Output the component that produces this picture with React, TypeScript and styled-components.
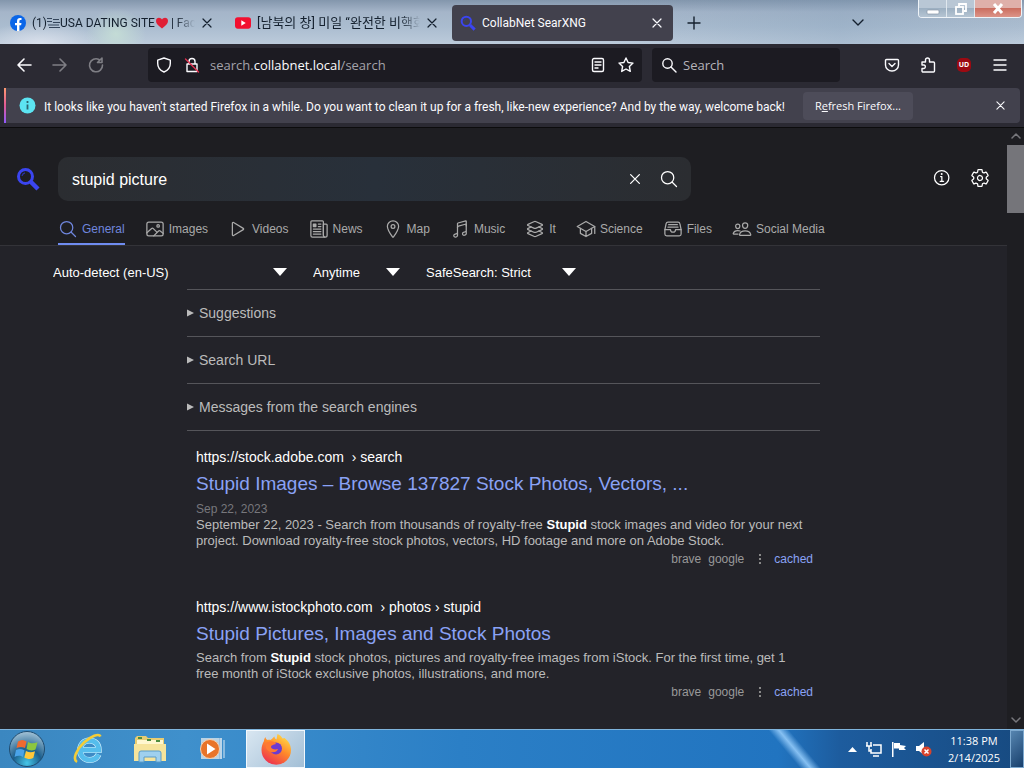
import React from "react";
import styled, { createGlobalStyle, css } from "styled-components";
import {
  IoSearchOutline, IoImageOutline, IoPlayOutline, IoNewspaperOutline, IoLocationOutline,
  IoMusicalNotesOutline, IoLayersOutline, IoSchoolOutline, IoFileTrayFullOutline,
  IoPeopleOutline, IoInformationCircleOutline, IoSettingsOutline, IoCloseOutline,
} from "react-icons/io5";

const UI = `Roboto, "Noto Sans", "Noto Sans CJK KR", sans-serif`;
const UI_WIDE = `"Open Sans", "Noto Sans", sans-serif`;
const WEB = `"Liberation Sans", Arial, sans-serif`;

const Global = createGlobalStyle`
  *, *::before, *::after { box-sizing: border-box; }
  body { margin: 0; background: #232329; }
  button, input, select { font: inherit; color: inherit; background: none; border: 0; margin: 0; padding: 0; outline: 0; }
  button { cursor: pointer; }
  a { text-decoration: none; color: inherit; }
  svg { display: block; flex: none; }
`;

const Screen = styled.div`
  height: 100vh;
  min-height: 600px;
  display: flex;
  flex-direction: column;
  overflow: hidden;
  font-family: ${UI};
  font-size: 12px;
`;

/* ---- browser chrome ---- */

const TabStrip = styled.div`
  height: 44px;
  flex: none;
  display: flex;
  color: #14202e;
  background:
    radial-gradient(ellipse 30px 26px at 116px 34px, rgba(200, 226, 214, 0.8), transparent),
    radial-gradient(ellipse 60px 22px at 40px 44px, rgba(226, 230, 240, 0.8), transparent),
    linear-gradient(90deg, transparent 60%, rgba(120, 150, 180, 0.25) 82%, transparent),
    linear-gradient(180deg, #8396ac 0, #a5b5c9 12px, #aabccf 26px, #bccbdb 44px);
`;
const TabList = styled.div`
  flex: 1;
  min-width: 0;
  display: flex;
  align-items: center;
  padding-top: 2px;
`;
const Tab = styled.div<{ $active?: boolean }>`
  width: 225px;
  height: 36px;
  display: flex;
  align-items: center;
  gap: 6px;
  padding: 0 12px 0 10px;
  border-radius: 4px;
  ${(p) => p.$active && css`
    width: 221px;
    margin: 0 13px 0 2px;
    padding: 0 10px 0 8px;
    background: #42414d;
    color: #fbfbfe;
  `}
`;
const TabTitle = styled.span<{ $fade?: boolean; $korean?: boolean }>`
  flex: 1;
  min-width: 0;
  overflow: hidden;
  white-space: nowrap;
  line-height: 20px;
  font-size: ${(p) => (p.$korean ? 13 : 12)}px;
  ${(p) => p.$fade && css`mask-image: linear-gradient(90deg, #000 calc(100% - 20px), transparent);`}
`;
const IconButton = styled.button<{ $size?: number; $dim?: boolean }>`
  width: ${(p) => p.$size ?? 16}px;
  height: ${(p) => p.$size ?? 16}px;
  flex: none;
  display: grid;
  place-items: center;
  opacity: ${(p) => (p.$dim ? 0.4 : 1)};
`;
const AllTabs = styled.div`
  display: flex;
  align-items: center;
  padding: 0 52px 0 0;
`;
const WindowButtons = styled.div`
  width: 104px;
  height: 18px;
  margin-right: 2px;
  display: flex;
  border: 1px solid #eef3f8;
  border-top: 0;
  border-radius: 0 0 4px 4px;
  overflow: hidden;
`;
const WindowButton = styled.button<{ $close?: boolean }>`
  flex: ${(p) => (p.$close ? 46 : 27)};
  display: grid;
  place-items: center;
  border-right: ${(p) => (p.$close ? 0 : "1px solid #dfe7ee")};
  background: ${(p) => (p.$close
    ? "linear-gradient(#dfb0aa 0 45%, #cb6e60 50%, #dc9488)"
    : "linear-gradient(#b9c7d5 0 45%, #9db0c2 50%, #b5c5d3)")};
`;

const NavBar = styled.div`
  height: 44px;
  flex: none;
  display: flex;
  align-items: center;
  padding: 0 16px 2px;
  background: #2b2a33;
  color: #fbfbfe;
  font-family: ${UI_WIDE};
  font-size: 13px;
`;
const NavGroup = styled.div`
  display: flex;
  gap: 20px;
  margin-right: 44px;
`;
const UrlBox = styled.div`
  flex: 1;
  height: 34px;
  display: flex;
  align-items: center;
  gap: 10px;
  padding: 0 8px;
  border-radius: 4px;
  background: #1c1b22;
`;
const Address = styled.div`
  flex: 1;
  white-space: nowrap;
  color: #a4a3aa;
  b { font-weight: 400; color: #fbfbfe; }
`;
const SearchBox = styled.label`
  width: 188px;
  height: 34px;
  margin: 0 44px 0 10px;
  display: flex;
  align-items: center;
  gap: 6px;
  padding: 0 9px;
  border-radius: 4px;
  background: #1c1b22;
  input { flex: 1; min-width: 0; }
  input::placeholder { color: #b5b4bb; opacity: 1; }
`;
const ToolGroup = styled.div`
  display: flex;
  gap: 20px;
`;
const UrlActions = styled.div`
  display: flex;
  gap: 12px;
`;
const Blocker = styled.span`
  width: 14px;
  height: 14px;
  display: grid;
  place-items: center;
  border-radius: 5px;
  background: #9c0a12;
  color: #fff;
  font-size: 7px;
  font-weight: 700;
  line-height: 14px;
`;

const NoticeArea = styled.div`
  flex: none;
  padding: 0 4px 4px;
  background: #2b2a33;
  border-bottom: 1px solid #0c0c0d;
`;
const Notice = styled.div`
  height: 35px;
  display: flex;
  align-items: center;
  padding: 0 12px 0 15px;
  border-radius: 0 4px 4px 0;
  background: linear-gradient(180deg, #ff9a70, #e05a94 50%, #9059ff) left / 2px 100% no-repeat, #42414d;
  color: #fbfbfe;
  white-space: nowrap;
`;
const NoticeText = styled.span`
  margin: 0 18px 0 8px;
  padding-top: 2px;
  line-height: 20px;
`;
const RefreshButton = styled.button`
  width: 110px;
  height: 28px;
  margin-right: auto;
  border-radius: 4px;
  background: #4d4c59;
  font-family: ${UI_WIDE};
  font-size: 11px;
`;

/* ---- web page ---- */

const Viewport = styled.div`
  flex: 1;
  min-height: 0;
  display: flex;
  font-family: ${WEB};
  background: #232329;
`;
const Page = styled.main`
  flex: 1;
  min-width: 0;
  overflow: hidden;
  color: #bbb;
`;
const PageHeader = styled.header`
  background: #1e1e22;
  border-bottom: 1px solid #333338;
`;
const SearchRow = styled.form`
  display: flex;
  align-items: center;
  padding: 29px 17px 14px 16px;
  color: #fff;
`;
const QueryBox = styled.div`
  width: 633px;
  height: 44px;
  margin: 0 auto 0 18px;
  display: flex;
  align-items: center;
  gap: 14px;
  padding: 0 12px 0 14px;
  border-radius: 10px;
  background: linear-gradient(90deg, #2b2d31, #28303a 50%, #2b2d31);
  font-size: 16px;
  input { flex: 1; min-width: 0; padding-top: 2px; }
`;
const HeaderLinks = styled.div`
  display: flex;
  gap: 18px;
  padding-bottom: 2px;
`;
const Categories = styled.nav`
  display: flex;
  gap: 20px;
  padding-left: 58px;
`;
const Category = styled.a<{ $active?: boolean }>`
  height: 30px;
  display: flex;
  align-items: center;
  gap: 4px;
  font-size: 12px;
  white-space: nowrap;
  color: ${(p) => (p.$active ? "#6f86dd" : "#aaa")};
  border-bottom: 2px solid ${(p) => (p.$active ? "#6f8cf0" : "transparent")};
`;
const Filters = styled.div`
  display: flex;
  gap: 26px;
  padding: 16px 0 7px 53px;
  color: #fff;
  font-size: 13px;
`;
const Filter = styled.div<{ $width: number }>`
  width: ${(p) => p.$width}px;
  height: 20px;
  display: grid;
  align-items: center;
  select, svg { grid-area: 1 / 1; }
  select { appearance: none; width: 100%; }
  svg { justify-self: end; pointer-events: none; }
`;
const Column = styled.div`
  max-width: 633px;
  margin-left: 187px;
`;
const Fold = styled.details`
  border-top: 1px solid #55555a;
  &:nth-of-type(3) { border-bottom: 1px solid #55555a; }
  summary {
    height: 46px;
    display: flex;
    align-items: center;
    gap: 5px;
    font-size: 14px;
    list-style: none;
    cursor: pointer;
  }
`;
const Result = styled.article`
  padding: 17px 7px 0 9px;
  & + & { padding-top: 30px; }
`;
const ResultUrl = styled.a`
  display: block;
  font-size: 14px;
  line-height: 18px;
  color: #fff;
  span { margin-left: 4px; }
`;
const ResultTitle = styled.h3`
  margin: 5px 0 3px;
  font-size: 19px;
  line-height: 26px;
  font-weight: 400;
  white-space: nowrap;
  color: #8aa2f5;
`;
const Published = styled.time`
  display: block;
  padding-top: 1px;
  font-size: 12px;
  line-height: 16px;
  color: #77777c;
`;
const Snippet = styled.p`
  margin: 0;
  padding-right: 8px;
  font-size: 13px;
  line-height: 16px;
  b { color: #fff; }
`;
const Engines = styled.div`
  display: flex;
  justify-content: flex-end;
  align-items: center;
  gap: 7px;
  margin-top: 1px;
  font-size: 12px;
  line-height: 18px;
  color: #999;
  svg { margin: 0 5px 0 8px; }
  a { color: #8aa2f5; }
`;
const ScrollBar = styled.div`
  width: 17px;
  flex: none;
  display: flex;
  flex-direction: column;
  align-items: center;
  padding: 3px 0 4px;
  background: #1e1e22;
`;
const ScrollThumb = styled.div`
  width: 17px;
  height: 68px;
  margin: 4px 0 auto;
  background: #75757a;
`;

/* ---- taskbar ---- */

const TaskBar = styled.footer`
  height: 39px;
  flex: none;
  display: flex;
  align-items: center;
  border-top: 1px solid #7fb4dc;
  color: #fff;
  background:
    linear-gradient(50deg, transparent calc(100% - 196px), #86c0f2 calc(100% - 188px), transparent calc(100% - 180px)),
    linear-gradient(90deg, #3b87c0 0, #3f90cc 18%, #2b7fc6 45%, #2174c0 76%, #1d5c9e 82%, #174a80 100%);
`;
const StartButton = styled.button`
  width: 36px;
  height: 36px;
  margin: 0 13px 0 9px;
`;
const TaskButton = styled.button<{ $active?: boolean }>`
  width: 59px;
  height: 38px;
  margin-right: 3px;
  display: grid;
  place-items: center;
  ${(p) => p.$active && css`
    margin-left: 2px;
    border: 1px solid #f2f8fd;
    background: linear-gradient(135deg, #d8e6f1, #a3bfd6);
  `}
`;
const Tray = styled.div`
  margin-left: auto;
  display: flex;
  align-items: center;
  gap: 8px;
`;
const Clock = styled.div`
  width: 52px;
  margin: 0 2px 0 8px;
  text-align: center;
  font-family: ${UI_WIDE};
  font-size: 11px;
  line-height: 17px;
  white-space: nowrap;
`;
const ShowDesktop = styled.button`
  width: 14px;
  height: 38px;
  border: 1px solid #7da9cf;
  background: linear-gradient(135deg, #5685b0, #173f6c);
`;

/* ---- drawings ---- */

const InlineDrawing = styled.svg`
  display: inline-block;
  vertical-align: -2px;
`;

type LineProps = { size?: number; w?: number; box?: number; color?: string; children: React.ReactNode };
const Line = ({ size = 16, w = 1.4, box = 16, color = "currentColor", children }: LineProps) => (
  <svg width={size} height={size} viewBox={`0 0 ${box} ${box}`} fill="none" stroke={color} strokeWidth={w} strokeLinecap="round" strokeLinejoin="round" aria-hidden>
    {children}
  </svg>
);
const Cross = ({ size = 10, w = 1.2 }: { size?: number; w?: number }) => (
  <Line size={size} box={10} w={w}><path d="M1 1l8 8M9 1L1 9" /></Line>
);
const Facebook = () => (
  <svg width="16" height="16" viewBox="0 0 16 16" aria-hidden>
    <circle cx="8" cy="8" r="8" fill="#0a66e8" />
    <path d="M7 16V10.2H5V7.9h2V6.2c0-2.1 1.2-3.2 3-3.2.8 0 1.5.1 1.5.1v1.9h-.9c-.9 0-1.2.6-1.2 1.2v1.7h2.1l-.4 2.3H9.4V16z" fill="#fff" />
  </svg>
);
const YouTube = () => (
  <svg width="16" height="16" viewBox="0 0 17 16" aria-hidden>
    <rect y="2" width="17" height="12" rx="3" fill="#f20f2f" />
    <path d="M6.7 5.2v5.6L11.4 8z" fill="#fff" />
  </svg>
);
const Flag = () => (
  <InlineDrawing width="13" height="12" viewBox="0 0 13 12" aria-hidden>
    <path d="M0 1.5h5M6 2.5h6M0 4.5h5M6 5.5h7M1 8h11M2 10.5h11" stroke="#33445a" fill="none" />
  </InlineDrawing>
);
const Heart = () => (
  <InlineDrawing width="13" height="12" viewBox="-1 0 13 12" aria-hidden>
    <path d="M6 11.5C2.5 8.7 0 6.6 0 3.9 0 2 1.4.8 3 .8c1.3 0 2.4.7 3 1.8C6.6 1.5 7.7.8 9 .8c1.6 0 3 1.2 3 3.1 0 2.7-2.5 4.8-6 7.6z" fill="#e01f35" />
  </InlineDrawing>
);
const Magnifier = ({ size }: { size: number }) => (
  <svg width={size} height={size} viewBox="0 0 24 24" fill="none" stroke="#3b45f0" aria-hidden>
    <circle cx="9.5" cy="9.5" r="7" strokeWidth="3" />
    <path d="M6 9a4 4 0 0 1 3-3.2" stroke="#2a33a8" strokeWidth="1.2" />
    <path d="M15 15l7 7" strokeWidth="4.5" />
  </svg>
);
const Arrow = () => (
  <svg width="14" height="8" viewBox="0 0 14 8" aria-hidden><path d="M0 0h14L7 8z" fill="#fff" /></svg>
);
const Disclosure = () => (
  <svg width="7" height="8" viewBox="0 0 7 8" aria-hidden><path d="M0 .5v7L7 4z" fill="#bbb" /></svg>
);
const Kebab = () => (
  <svg width="3" height="13" viewBox="0 0 3 13" aria-hidden fill="#888">
    <rect y="1" width="2" height="2" /><rect y="5" width="2" height="2" /><rect y="9" width="2" height="2" />
  </svg>
);

const categories = [
  { name: "General", Icon: IoSearchOutline },
  { name: "Images", Icon: IoImageOutline },
  { name: "Videos", Icon: IoPlayOutline },
  { name: "News", Icon: IoNewspaperOutline },
  { name: "Map", Icon: IoLocationOutline },
  { name: "Music", Icon: IoMusicalNotesOutline },
  { name: "It", Icon: IoLayersOutline },
  { name: "Science", Icon: IoSchoolOutline },
  { name: "Files", Icon: IoFileTrayFullOutline },
  { name: "Social Media", Icon: IoPeopleOutline },
];
const filters = [
  { label: "Language", value: "Auto-detect (en-US)", width: 234 },
  { label: "Time range", value: "Anytime", width: 87 },
  { label: "Safe search", value: "SafeSearch: Strict", width: 150 },
];

const ResultFooter = () => (
  <Engines><span>brave</span><span>google</span><Kebab /><a href="#cached">cached</a></Engines>
);

export default function App() {
  return (
    <Screen>
      <Global />
      <TabStrip>
        <TabList>
          <Tab>
            <Facebook />
            <TabTitle $fade>(1)<Flag />USA DATING SITE<Heart /> | Fac</TabTitle>
            <IconButton aria-label="Close tab" $size={12}><Cross /></IconButton>
          </Tab>
          <Tab>
            <YouTube />
            <TabTitle $fade $korean>[남북의 창] 미일 “완전한 비핵화</TabTitle>
            <IconButton aria-label="Close tab" $size={12}><Cross /></IconButton>
          </Tab>
          <Tab $active>
            <Magnifier size={16} />
            <TabTitle>CollabNet SearXNG</TabTitle>
            <IconButton aria-label="Close tab" $size={12}><Cross /></IconButton>
          </Tab>
          <IconButton aria-label="New tab"><Line><path d="M8 2v12M2 8h12" /></Line></IconButton>
        </TabList>
        <AllTabs>
          <IconButton aria-label="List all tabs"><Line><path d="M3 6l5 5 5-5" /></Line></IconButton>
        </AllTabs>
        <WindowButtons>
          <WindowButton aria-label="Minimize">
            <svg width="14" height="12" viewBox="0 0 14 12"><rect x="1" y="7" width="12" height="4" rx="1" fill="#fff" stroke="#8797a8" strokeWidth=".7" /></svg>
          </WindowButton>
          <WindowButton aria-label="Restore">
            <svg width="12" height="12" viewBox="0 0 12 12" fill="none" stroke="#fff" strokeWidth="1.8"><path d="M4 3V1h7v7H9" /><rect x="1" y="4" width="7" height="7" /></svg>
          </WindowButton>
          <WindowButton $close aria-label="Close">
            <svg width="12" height="11" viewBox="0 0 12 11"><path d="M2 1l8 9M10 1L2 10" stroke="#fff" strokeWidth="3" /></svg>
          </WindowButton>
        </WindowButtons>
      </TabStrip>

      <NavBar>
        <NavGroup>
          <IconButton aria-label="Back"><Line w={1.6}><path d="M15 8H2M8 2L2 8l6 6" /></Line></IconButton>
          <IconButton aria-label="Forward" $dim><Line w={1.6}><path d="M1 8h13M8 2l6 6-6 6" /></Line></IconButton>
          <IconButton aria-label="Reload" $dim><Line w={1.6}><path d="M11 2.5A6.5 6.5 0 1 0 14.5 8M9.5 5.5H14V1z" /></Line></IconButton>
        </NavGroup>
        <UrlBox>
          <UrlActions>
            <IconButton aria-label="Tracking protection"><Line><path d="M8 1l6.3 2.2v3.3c0 4-2.3 6.9-6.3 8.5-4-1.6-6.3-4.5-6.3-8.5V3.2z" /></Line></IconButton>
            <IconButton aria-label="Connection not secure">
              <Line><path d="M3 7h10v7.5H3zM5 7V4.5a3 3 0 0 1 6 0V7" /><path d="M1.5 2l13 13" stroke="#e0304f" /></Line>
            </IconButton>
          </UrlActions>
          <Address>search.<b>collabnet.local</b>/search</Address>
          <UrlActions>
            <IconButton aria-label="Reader view"><Line><rect x="2.5" y="1.5" width="11" height="13" rx="1.5" /><path d="M5 5h6M5 8h6M5 11h3" /></Line></IconButton>
            <IconButton aria-label="Bookmark"><Line><path d="M8 1l2.1 4.5 4.9.6-3.6 3.4.9 4.9L8 12l-4.3 2.4.9-4.9L1 6.1l4.9-.6z" /></Line></IconButton>
          </UrlActions>
        </UrlBox>
        <SearchBox>
          <Line><circle cx="6.5" cy="6.5" r="4.7" /><path d="M10 10l5 5" /></Line>
          <input aria-label="Search the web" placeholder="Search" />
        </SearchBox>
        <ToolGroup>
          <IconButton aria-label="Pocket"><Line><path d="M2.5 2.5h11a1 1 0 0 1 1 1V8a6.5 6 0 0 1-13 0V3.5a1 1 0 0 1 1-1zM5 6.5l3 3 3-3" /></Line></IconButton>
          <IconButton aria-label="Extensions"><Line><path d="M2 5h3.5V3a2 2 0 0 1 4 0v2H13.5a1 1 0 0 1 1 1v8a1 1 0 0 1-1 1H3a1 1 0 0 1-1-1v-2.5h2a1.8 1.8 0 0 0 0-3.5H2z" /></Line></IconButton>
          <IconButton aria-label="uBlock"><Blocker>UD</Blocker></IconButton>
          <IconButton aria-label="Menu"><Line><path d="M2 3h12M2 8h12M2 13h12" /></Line></IconButton>
        </ToolGroup>
      </NavBar>

      <NoticeArea>
        <Notice>
          <svg width="17" height="17" viewBox="0 0 17 17" aria-hidden><circle cx="8.5" cy="8.5" r="8" fill="#5ce4f2" /><path d="M8.5 7.5v5M8.5 4v2" stroke="#2c6470" strokeWidth="1.8" /></svg>
          <NoticeText>It looks like you haven't started Firefox in a while. Do you want to clean it up for a fresh, like-new experience? And by the way, welcome back!</NoticeText>
          <RefreshButton>R<u>e</u>fresh Firefox...</RefreshButton>
          <IconButton aria-label="Dismiss"><Cross size={9} /></IconButton>
        </Notice>
      </NoticeArea>

      <Viewport>
        <Page>
          <PageHeader>
            <SearchRow onSubmit={(e) => e.preventDefault()}>
              <a href="#home" aria-label="Home"><Magnifier size={24} /></a>
              <QueryBox>
                <input aria-label="Query" defaultValue="stupid picture" />
                <IconButton type="button" aria-label="Clear" $size={20}><IoCloseOutline size={20} /></IconButton>
                <IconButton type="submit" aria-label="Search" $size={20}><IoSearchOutline size={20} /></IconButton>
              </QueryBox>
              <HeaderLinks>
                <a href="#about" aria-label="About"><IoInformationCircleOutline size={20} /></a>
                <a href="#preferences" aria-label="Preferences"><IoSettingsOutline size={20} /></a>
              </HeaderLinks>
            </SearchRow>
            <Categories>
              {categories.map(({ name, Icon }, i) => (
                <Category key={name} href={`#${name}`} $active={i === 0}><Icon size={20} />{name}</Category>
              ))}
            </Categories>
          </PageHeader>
          <Filters>
            {filters.map((f) => (
              <Filter key={f.label} $width={f.width}>
                <select aria-label={f.label}><option>{f.value}</option></select>
                <Arrow />
              </Filter>
            ))}
          </Filters>
          <Column>
            {["Suggestions", "Search URL", "Messages from the search engines"].map((t) => (
              <Fold key={t}><summary><Disclosure />{t}</summary></Fold>
            ))}
            <Result>
              <ResultUrl href="#adobe">https://stock.adobe.com <span>› search</span></ResultUrl>
              <ResultTitle><a href="#adobe">Stupid Images – Browse 137827 Stock Photos, Vectors, ...</a></ResultTitle>
              <Published>Sep 22, 2023</Published>
              <Snippet>September 22, 2023 - Search from thousands of royalty-free <b>Stupid</b> stock images and video for your next project. Download royalty-free stock photos, vectors, HD footage and more on Adobe Stock.</Snippet>
              <ResultFooter />
            </Result>
            <Result>
              <ResultUrl href="#istock">https://www.istockphoto.com <span>› photos › stupid</span></ResultUrl>
              <ResultTitle><a href="#istock">Stupid Pictures, Images and Stock Photos</a></ResultTitle>
              <Snippet>Search from <b>Stupid</b> stock photos, pictures and royalty-free images from iStock. For the first time, get 1 free month of iStock exclusive photos, illustrations, and more.</Snippet>
              <ResultFooter />
            </Result>
          </Column>
        </Page>
        <ScrollBar>
          <Line size={10} box={10} w={1.5} color="#77777c"><path d="M1 7l4-4 4 4" /></Line>
          <ScrollThumb />
          <Line size={10} box={10} w={1.5} color="#77777c"><path d="M1 3l4 4 4-4" /></Line>
        </ScrollBar>
      </Viewport>

      <TaskBar>
        <StartButton aria-label="Start">
          <svg width="36" height="36" viewBox="0 0 36 36">
            <defs>
              <radialGradient id="orb" cx=".5" cy=".9" r=".9"><stop offset="0" stopColor="#45c6e8" /><stop offset=".45" stopColor="#1b5e8c" /><stop offset="1" stopColor="#a5c4d8" /></radialGradient>
            </defs>
            <circle cx="18" cy="18" r="17.5" fill="url(#orb)" stroke="#1f4c70" />
            <path d="M9 10.5c3-2 5.5-2 8.5 0L16 17c-3-1.5-5.5-1.5-8.5 0z" fill="#ee6a30" />
            <path d="M19 11c3 2 6 1.5 9.5.3L26.5 18.5c-3.5 1.5-6 1-9-.5z" fill="#8cc63f" />
            <path d="M7 19c3-1.6 5.5-1.4 8.5.2L14 26c-3-2-5.5-1.5-8.5 0z" fill="#4aa3e8" />
            <path d="M17 20c3 1.7 5.8 1.7 9 .2L24.3 27c-3.5 1.5-6 1-9-.6z" fill="#ffc83a" />
          </svg>
        </StartButton>
        <TaskButton aria-label="Internet Explorer">
          <svg width="32" height="32" viewBox="0 0 32 32" fill="none">
            <path d="M26.5 21.5c-1.5 3.5-4.8 5.5-8.9 5.5-5.5 0-9.5-4-9.5-9.8C8.1 11.5 12 7.5 17.3 7.5c6 0 9.5 4 9.4 9.5H10" stroke="#d6f3ff" strokeWidth="6" />
            <path d="M26.5 21.5c-1.5 3.5-4.8 5.5-8.9 5.5-5.5 0-9.5-4-9.5-9.8C8.1 11.5 12 7.5 17.3 7.5c6 0 9.5 4 9.4 9.5H10" stroke="#55bdec" strokeWidth="4.8" />
            <path d="M5 29c-5-3 0-13 7-19.5C19 3 27 0 28.5 3.5" stroke="#f4cd38" strokeWidth="2.6" />
          </svg>
        </TaskButton>
        <TaskButton aria-label="Explorer">
          <svg width="32" height="28" viewBox="0 0 32 28">
            <path d="M1 3l2-2h9l2 2h16v22H1z" fill="#e7cc72" /><path d="M3 5h26v4H3z" fill="#fff7cf" />
            <path d="M4 3h4M13 5h4M22 6h4" stroke="#4f8d3f" strokeWidth="2" /><path d="M0 9h32v17H0z" fill="#f6e49c" />
            <path d="M5 27V18q0-2 2-2h18q2 0 2 2v9h-5v-5H10v5z" fill="#9fd0ee" stroke="#5b9cc8" />
          </svg>
        </TaskButton>
        <TaskButton aria-label="Media Player">
          <svg width="26" height="24" viewBox="0 0 26 24">
            <path d="M8 1h15v21H8z" fill="#9cc0dc" /><path d="M22 1v21M25 3v18" stroke="#dbeaf5" />
            <rect x="2" y="1" width="18" height="21" fill="#b9d3e5" /><circle cx="11" cy="12" r="9.5" fill="#e8742a" stroke="#f5d0b0" />
            <path d="M8 6.5v11l8.5-5.5z" fill="#fff" />
          </svg>
        </TaskButton>
        <TaskButton $active aria-label="Firefox">
          <svg width="32" height="32" viewBox="0 0 32 32">
            <defs><linearGradient id="fx" x1=".8" y1="0" x2=".2" y2="1"><stop offset="0" stopColor="#ffe14a" /><stop offset=".45" stopColor="#ff8a2a" /><stop offset="1" stopColor="#ec2a52" /></linearGradient></defs>
            <path d="M4 8c0-1 .5-3 1.5-4 0 1.5 1 2.5 2 3 1 0 2-.5 3 0 2-1 3-3 4-3.5 0 1.5 1 2.5 2 3l1-5.5c3 1 4 3 5 4.5l2-.5c4 3 6.5 7 6.5 12A14.5 14.5 0 0 1 1.5 17c0-3.5 1-6.5 2.5-9z" fill="url(#fx)" />
            <circle cx="16" cy="15.5" r="6" fill="#6c3bd0" /><path d="M6 10c4-3 9-2 10 1-3 1-5 1-5 3s4 3 7 2c-1 4-9 5-12-1z" fill="#ff7a30" />
          </svg>
        </TaskButton>
        <Tray>
          <svg width="9" height="5" viewBox="0 0 9 5" aria-hidden><path d="M0 5l4.5-5L9 5z" fill="#fff" /></svg>
          <svg width="18" height="16" viewBox="0 0 18 16" aria-hidden fill="none" stroke="#fff" strokeWidth="1.5"><path d="M8 4h8v8H6V8M8 15h6M2 1v4h4V1M1 5h6M4 5v5h2" /></svg>
          <svg width="16" height="16" viewBox="0 0 16 16" aria-hidden fill="#fff"><path d="M1 1h1.5v15H1zM3 2h6v2l6 1-2 2 2 2H8V7.5H3z" /></svg>
          <svg width="17" height="16" viewBox="0 0 17 16" aria-hidden><path d="M1 5h3l5-4v13l-5-4H1z" fill="#fff" /><circle cx="11.5" cy="10.5" r="5" fill="#d8432c" /><path d="M9.5 8.5l4 4M13.5 8.5l-4 4" stroke="#fff" strokeWidth="1.5" /></svg>
          <Clock>11:38 PM<br />2/14/2025</Clock>
          <ShowDesktop aria-label="Show desktop" />
        </Tray>
      </TaskBar>
    </Screen>
  );
}
